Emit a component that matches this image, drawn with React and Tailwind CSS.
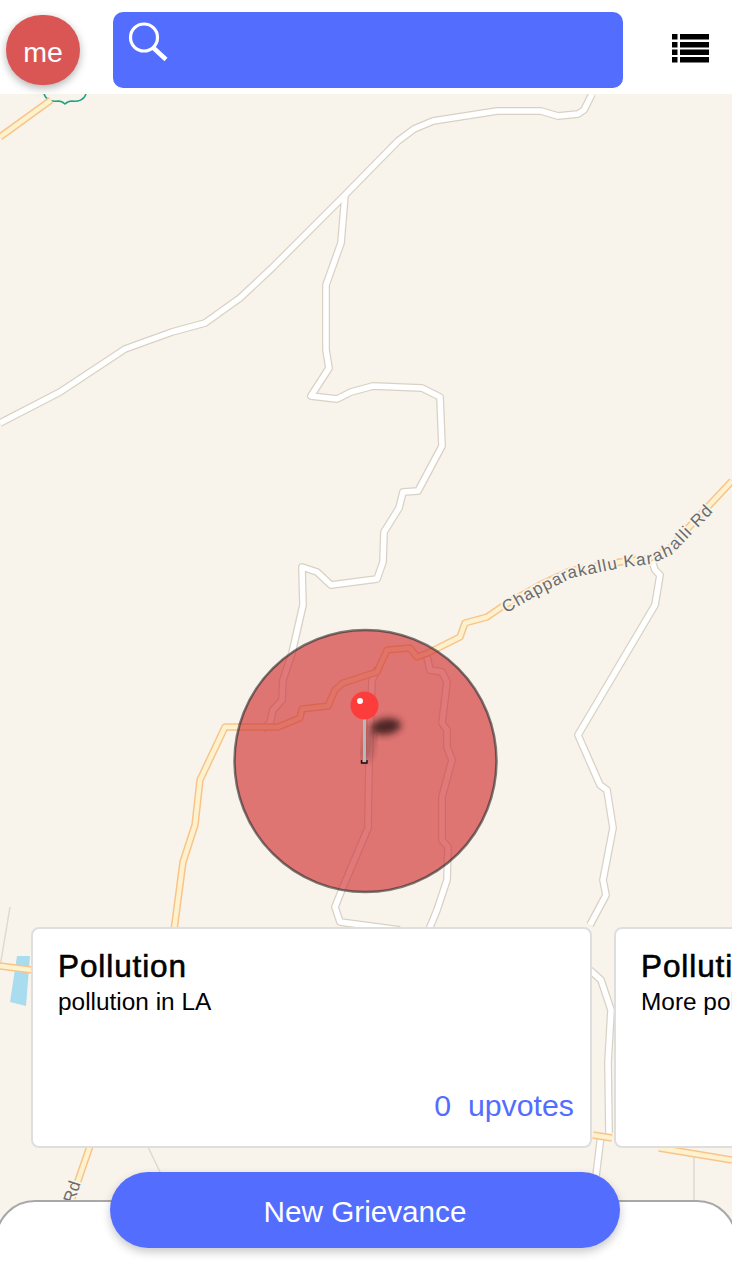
const MINOR = [
  "M592 94 584 110 578 114 558 116 541 111 497 111 433 121 414 129 398 141 345 195 272 268 240 298 205 323 172 332 125 349 60 392 0 423",
  "M345 195 341 243 326 285 326 350 329 368 311 396 337 399 351 392 373 386 422 388 440 397 442 446 418 491 403 492 399 508 384 532 383 562 377 579 331 585 317 572 302 567 303 605 292 653 283 680 282 700 273 710 270 723 262 729",
  "M378 668 372 680 369 763 368 828 343 887 335 907 340 922 400 930",
  "M427 657 430 670 442 672 447 682 442 723 447 730 447 747 452 760 442 797 442 840 448 847 447 880 437 910 428 932",
  "M650 555 655 570 660 575 655 605 578 735 600 785 607 790 613 828 603 880 606 895 590 925",
  "M590 970 601 980 611 1010 608 1063 609 1133",
  "M601 1135 596 1176",
];
const MAJOR = [
  "M0 137 51 100",
  "M174 930 183 862 195 825 200 780 225 727 278 727 300 718 302 709 328 706 335 690 343 683 377 672 387 650 410 648 417 657 428 653 460 637 465 623 487 617 503 606 540 585 570 571 620 562 650 558 668 550 700 515 732 481",
  "M0 966 32 970",
  "M90 1146 70 1204",
  "M593 1135 612 1138",
  "M659 1148 732 1160",
];
const THIN = ["M10 907 0 967", "M148 1147 161 1174", "M694 1155 694 1202"];

function MapLayer() {
  return (
    <svg width="732" height="1194" viewBox="0 94 732 1194" className="block">
      <path d="M17 956 30 956 26 1006 10 1002Z" fill="#a9dcef" />
      <path d="M44 94c2 6 8 8 14 7 3 0 5 1 7 3 2-2 4-3 7-3 6 1 12-1 14-7" fill="none" stroke="#1ba37f" strokeWidth="1.5" />
      {THIN.map((d) => (
        <path key={d} d={d} fill="none" stroke="#dfd9ce" strokeWidth="1.5" />
      ))}
      {MINOR.map((d) => (
        <path key={d} d={d} fill="none" stroke="#d9d1c3" strokeWidth="8" strokeLinejoin="round" />
      ))}
      {MINOR.map((d) => (
        <path key={d + "i"} d={d} fill="none" stroke="#ffffff" strokeWidth="5.5" strokeLinejoin="round" />
      ))}
      {MAJOR.map((d) => (
        <path key={d} d={d} fill="none" stroke="#f8c48a" strokeWidth="7.5" strokeLinejoin="round" />
      ))}
      {MAJOR.map((d) => (
        <path key={d + "i"} d={d} fill="none" stroke="#fdf2cd" strokeWidth="4.5" strokeLinejoin="round" />
      ))}
      <path id="roadLabel" d="M503 608 540 587 570 572 620 562 650 558 668 550 700 517 716 500" fill="none" />
      <text fontFamily="'Liberation Sans', sans-serif" fontSize="17" fill="#6b6b6b" stroke="#f8f4ec" strokeWidth="3.5" paintOrder="stroke" dy="6">
        <textPath href="#roadLabel" textLength="236">Chapparakallu Karahalli Rd</textPath>
      </text>
      <text
        transform="translate(74 1204) rotate(-72)"
        fontFamily="'Liberation Sans', sans-serif"
        fontSize="17"
        fill="#6b6b6b"
        stroke="#f8f4ec"
        strokeWidth="3.5"
        paintOrder="stroke"
      >
        Rd
      </text>
      <defs>
        <filter id="b1" x="-60%" y="-60%" width="220%" height="220%">
          <feGaussianBlur stdDeviation="3.5" />
        </filter>
      </defs>
      <circle cx="365.5" cy="761" r="131" fill="rgba(208,49,51,0.65)" stroke="rgba(40,40,40,0.6)" strokeWidth="2.5" />
      <path d="M365 760 373 728" stroke="rgba(60,30,30,0.3)" strokeWidth="10" filter="url(#b1)" />
      <ellipse cx="386" cy="726.5" rx="15" ry="8" transform="rotate(-8 386 726.5)" fill="#3e1e1e" opacity="0.9" filter="url(#b1)" />
      <rect x="363" y="718" width="3" height="44" fill="#b3bcbc" />
      <path d="M361.5 760v3h5.5v-3" fill="none" stroke="#111" strokeWidth="1.3" />
      <circle cx="364.5" cy="705.5" r="14" fill="#fd3c3c" />
      <circle cx="360" cy="701" r="3" fill="#ffffff" />
    </svg>
  );
}

function Card({ sub, votes }) {
  return (
    <div className="flex h-[221px] w-[561px] shrink-0 flex-col rounded-lg border-2 border-[#dedede] bg-white pl-[25px] pr-[16px] pt-[19px]">
      <div className="text-[31.5px] tracking-[0.9px] leading-[36px] text-black whitespace-nowrap [-webkit-text-stroke:0.6px_#000]">Pollution</div>
      <div className="mt-px text-[24.4px] leading-[34px] text-black whitespace-nowrap">{sub}</div>
      <div className="mt-auto mb-[21px] text-right text-[30.3px] leading-[38px] text-[#536dfe] whitespace-pre">{votes}  upvotes</div>
    </div>
  );
}

export default function App() {
  return (
    <div className="relative flex h-[1288px] w-[732px] flex-col overflow-hidden bg-[#f8f4ec] font-['Liberation_Sans',sans-serif]">
      <header className="relative z-10 flex h-[94px] shrink-0 items-center bg-white pt-[6px]">
        <div className="ml-[6px] flex h-[70px] w-[74px] items-center justify-center rounded-full bg-[#d95654] pt-[4px] text-[28.5px] text-white shadow-[0_3px_8px_rgba(0,0,0,0.3)]">
          me
        </div>
        <div className="ml-[33px] h-[76px] w-[510px] rounded-[10px] bg-[#536dfe] pl-[15px] pt-[10px]">
          <svg width="40" height="40" viewBox="0 0 40 40" fill="none" stroke="#fff">
            <circle cx="16" cy="15.5" r="13.5" strokeWidth="3.2" />
            <path d="M25 25.5 38 37.5" strokeWidth="4.5" />
          </svg>
        </div>
        <svg className="ml-[49px] mb-[4px]" width="37" height="30" viewBox="0 0 37 30" fill="#000">
          <rect x="0" y="1" width="5.5" height="5.5" />
          <rect x="8" y="1" width="29" height="5.5" />
          <rect x="0" y="9" width="5.5" height="5.5" />
          <rect x="8" y="9" width="29" height="5.5" />
          <rect x="0" y="16.5" width="5.5" height="5.5" />
          <rect x="8" y="16.5" width="29" height="5.5" />
          <rect x="0" y="24" width="5.5" height="5.5" />
          <rect x="8" y="24" width="29" height="5.5" />
        </svg>
      </header>
      <main className="relative flex-1">
        <MapLayer />
      </main>
      <div className="absolute inset-x-0 top-[927px] flex gap-[22px] overflow-hidden pl-[31px]">
        <Card sub="pollution in LA" votes="0" />
        <Card sub="More pollution" votes="0" />
      </div>
      <div className="absolute -left-[5px] -right-[5px] top-[1200px] h-[120px] rounded-t-[40px] border-2 border-[#a8a8a8] bg-white" />
      <button className="absolute left-[110px] top-[1172px] h-[76px] w-[510px] rounded-[38px] bg-[#536dfe] pt-[4px] text-[29.7px] text-white shadow-[0_4px_10px_rgba(0,0,0,0.22)]">
        New Grievance
      </button>
    </div>
  );
}
